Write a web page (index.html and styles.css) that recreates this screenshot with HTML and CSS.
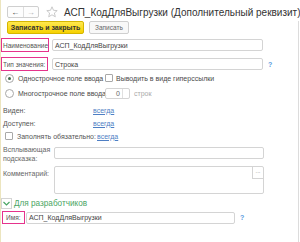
FILE: index.html
```html
<!DOCTYPE html>
<html lang="ru">
<head>
  <meta charset="UTF-8" />
  <title>АСП_КодДляВыгрузки (Дополнительный реквизит)</title>
  <link rel="stylesheet" href="styles.css">
</head>
<body>
  <div class="frame">
    <div class="strip"></div>
    <div class="main">
      <div class="header">
        <div class="nav">
          <span class="nav-btn">&#8592;</span>
          <span class="nav-btn off">&#8594;</span>
        </div>
        <svg class="star" width="12" height="12" viewBox="0 0 12 12">
          <path d="M6 0.8 L7.5 4.3 L11.2 4.6 L8.4 7 L9.3 10.8 L6 8.8 L2.7 10.8 L3.6 7 L0.8 4.6 L4.5 4.3 Z" fill="none" stroke="#c4c4c4" stroke-width="0.9" stroke-linejoin="round"/>
        </svg>
        <span class="title">АСП_КодДляВыгрузки (Дополнительный реквизит)</span>
      </div>

      <div class="form">
        <div class="toolbar">
          <button class="btn primary">Записать и закрыть</button>
          <button class="btn">Записать</button>
        </div>

        <div class="row field">
          <span class="mark">Наименование:</span>
          <span class="input wide">АСП_КодДляВыгрузки</span>
        </div>

        <div class="row field second">
          <span class="mark narrow">Тип значения:</span>
          <span class="input wide">Строка</span>
          <span class="help">?</span>
        </div>

        <div class="row opt">
          <span class="radio on"></span>
          <span class="opt-text">Однострочное поле ввода</span>
          <span class="check"></span>
          <span class="opt-text">Выводить в виде гиперссылки</span>
        </div>

        <div class="row opt">
          <span class="radio"></span>
          <span class="opt-text">Многострочное поле ввода</span>
          <span class="spin"><span class="spin-val">0</span><span class="spin-arr"></span></span>
          <span class="muted">строк</span>
        </div>

        <div class="row prop first">
          <span class="prop-label">Виден:</span>
          <a class="link">всегда</a>
        </div>

        <div class="row prop">
          <span class="prop-label">Доступен:</span>
          <a class="link">всегда</a>
        </div>

        <div class="row prop req">
          <span class="check"></span>
          <span class="prop-label short">Заполнять обязательно:</span>
          <a class="link">всегда</a>
        </div>

        <div class="row tip">
          <span class="side-label">Всплывающая<br>подсказка:</span>
          <span class="input tip-input"></span>
        </div>

        <div class="row note">
          <span class="side-label">Комментарий:</span>
          <span class="area"><span class="dots">...</span></span>
        </div>

        <div class="row group">
          <span class="chev">
            <svg width="9" height="9" viewBox="0 0 9 9"><path d="M1.5 3 L4.5 6 L7.5 3" fill="none" stroke="#4aa564" stroke-width="1.2"/></svg>
          </span>
          <span class="group-title">Для разработчиков</span>
        </div>

        <div class="row field name">
          <span class="mark tiny">Имя:</span>
          <span class="input name-input">АСП_КодДляВыгрузки</span>
          <span class="help">?</span>
        </div>
      </div>
    </div>
  </div>
</body>
</html>
```

FILE: styles.css
```css
body {
  margin: 0;
  font-family: "Liberation Sans", Arial, sans-serif;
  font-size: 7px;
  color: #4a4a4a;
  background: #fff;
}

.frame {
  display: flex;
  width: 300px;
  height: 242px;
  overflow: hidden;
}

.strip {
  width: 4px;
  background: #fbf8e3;
  border-right: 1px solid #ece5bf;
}

.main {
  flex: 1;
  display: flex;
  flex-direction: column;
}

.header {
  display: flex;
  align-items: center;
  height: 14px;
  margin-top: 5px;
  padding-left: 6px;
}

.nav {
  display: flex;
  width: 32px;
  height: 12px;
  border: 1px solid #cfcfcf;
  border-radius: 2px;
  box-sizing: border-box;
  background: #fdfdfd;
}

.nav-btn {
  flex: 1;
  display: flex;
  align-items: center;
  justify-content: center;
  font-size: 8px;
  color: #333;
  font-weight: bold;
}

.nav-btn.off {
  color: #b0b0b0;
  border-left: 1px solid #dedede;
}

.star {
  margin-left: 7px;
}

.title {
  margin-left: 6px;
  font-size: 10px;
  color: #333;
  white-space: nowrap;
}

.form {
  flex: 1;
  margin-right: 2px;
  border-right: 1px solid #dcdcdc;
  margin-top: 2px;
}

.toolbar {
  display: flex;
  gap: 5px;
  padding-left: 6px;
  height: 13px;
}

.btn {
  height: 13px;
  padding: 0 5px;
  font-family: inherit;
  font-size: 6.5px;
  color: #666;
  background: #f8f8f8;
  border: 1px solid #cfcfcf;
  border-radius: 2px;
  white-space: nowrap;
}

.btn.primary {
  width: 77px;
  padding: 0 2px;
  color: #333;
  font-weight: bold;
  font-size: 7px;
  background: linear-gradient(#ffe84f, #f6d100);
  border-color: #d6b600;
}

.row {
  display: flex;
  align-items: center;
  white-space: nowrap;
}

.field {
  height: 14px;
  margin-top: 4px;
}

.field.second {
  margin-top: 5px;
}

.mark {
  width: 48px;
  height: 14px;
  box-sizing: border-box;
  border: 1.5px solid #e5338c;
  display: flex;
  align-items: center;
  padding-left: 1px;
  font-size: 6.5px;
  color: #555;
  overflow: hidden;
}

.mark.narrow {
  width: 47px;
  margin-right: 1px;
}

.input {
  height: 12px;
  box-sizing: border-box;
  border: 1px solid #d4d4d4;
  border-radius: 2px;
  display: flex;
  align-items: center;
  padding-left: 2px;
  color: #444;
}

.input.wide {
  width: 211px;
  margin-left: 3px;
}

.help {
  margin-left: 5px;
  color: #5a9be0;
  font-weight: bold;
  font-size: 7px;
}

.opt {
  height: 10px;
  margin-top: 2px;
  padding-left: 4px;
}

.opt + .opt {
  margin-top: 5px;
}

.radio {
  width: 7px;
  height: 7px;
  border: 1px solid #a8a8a8;
  border-radius: 50%;
  background: #fff;
  position: relative;
}

.radio.on::after {
  content: "";
  position: absolute;
  left: 2px;
  top: 2px;
  width: 3px;
  height: 3px;
  border-radius: 50%;
  background: #3d6b4a;
}

.opt-text {
  margin-left: 4px;
  width: 87px;
}

.opt-text:last-child {
  width: auto;
  margin-left: 3px;
}

.check {
  width: 6px;
  height: 6px;
  border: 1px solid #a8a8a8;
  border-radius: 1px;
  background: #fff;
}

.spin {
  display: flex;
  width: 25px;
  height: 11px;
  box-sizing: border-box;
  border: 1px solid #d4d4d4;
  border-radius: 2px;
}

.spin-val {
  flex: 1;
  text-align: right;
  padding-right: 2px;
  line-height: 9px;
  color: #666;
}

.spin-arr {
  width: 6px;
  border-left: 1px solid #e0e0e0;
}

.muted {
  margin-left: 4px;
  color: #aaa;
}

.prop {
  height: 10px;
  padding-left: 2px;
  margin-top: 3px;
}

.prop.first {
  margin-top: 7px;
}

.prop.req {
  margin-top: 3px;
  padding-left: 4px;
}

.prop-label {
  width: 90px;
  color: #555;
}

.prop-label.short {
  width: 80px;
  margin-left: 4px;
}

.link {
  color: #4f7fc4;
  text-decoration: underline;
}

.tip {
  margin-top: 4px;
  height: 16px;
  padding-left: 2px;
}

.side-label {
  width: 48px;
  line-height: 9px;
  color: #666;
  align-self: flex-start;
}

.tip-input {
  width: 210px;
  height: 12px;
  margin-left: 3px;
}

.note {
  margin-top: 5px;
  padding-left: 2px;
  align-items: flex-start;
}

.note .side-label {
  margin-top: 3px;
}

.area {
  width: 210px;
  height: 28px;
  margin-left: 3px;
  box-sizing: border-box;
  border: 1px solid #d4d4d4;
  border-radius: 2px;
  display: flex;
  justify-content: flex-end;
}

.dots {
  width: 10px;
  height: 11px;
  border-left: 1px solid #d4d4d4;
  border-bottom: 1px solid #d4d4d4;
  font-size: 6px;
  color: #888;
  text-align: center;
  line-height: 9px;
}

.group {
  margin-top: 4px;
  height: 11px;
}

.chev {
  width: 9px;
  height: 9px;
  border: 1px solid #d4d4d4;
  display: flex;
  align-items: center;
  justify-content: center;
}

.group-title {
  margin-left: 2px;
  font-size: 8.2px;
  color: #4aa564;
}

.field.name {
  margin-top: 2px;
  height: 13px;
}

.mark.tiny {
  width: 23px;
  height: 13px;
  margin-left: 1px;
  padding-left: 3px;
}

.name-input {
  width: 209px;
  height: 12px;
  margin-left: 1px;
}
```
